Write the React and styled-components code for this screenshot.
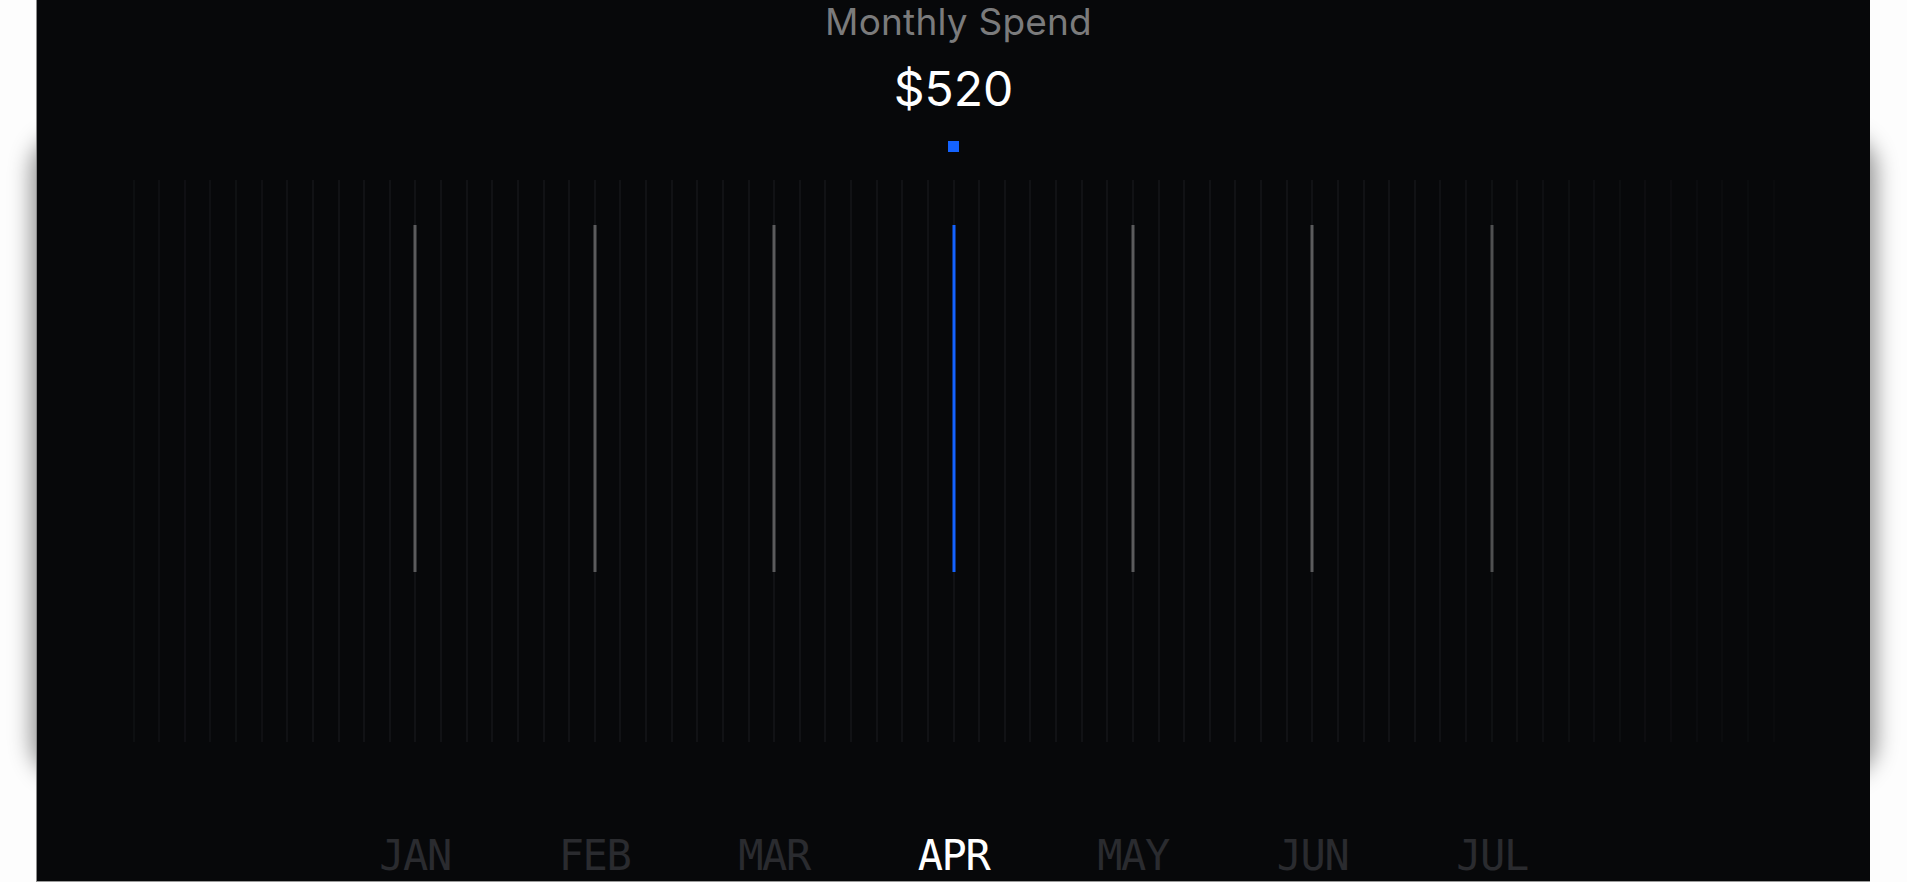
import React from "react";
import styled, { createGlobalStyle } from "styled-components";

const MONTHS = ["JAN", "FEB", "MAR", "APR", "MAY", "JUN", "JUL"];
const ACTIVE = 3;
const PER_MONTH = 7;
const LEAD = 11;
const TICKS = LEAD * 2 + PER_MONTH * (MONTHS.length - 1) + 1;
const STEP = 25.64;

function Chart() {
  const ticks = [];
  for (let i = 0; i < TICKS; i++) {
    const rel = i - LEAD;
    const isMonth = rel >= 0 && rel % PER_MONTH === 0 && rel / PER_MONTH < MONTHS.length;
    const month = isMonth ? rel / PER_MONTH : -1;
    ticks.push(
      <TickSlot key={i}>
        <FaintLine />
        {isMonth && <MonthLine $active={month === ACTIVE} />}
      </TickSlot>
    );
  }
  return (
    <ChartArea>
      <TickRow>{ticks}</TickRow>
    </ChartArea>
  );
}

export default function App() {
  return (
    <>
      <GlobalStyle />
      <Page>
        <Panel>
          <Title>Monthly Spend</Title>
          <Amount>$520</Amount>
          <Marker />
          <Chart />
          <Labels>
            {MONTHS.map((m, i) => (
              <Label key={m} $active={i === ACTIVE}>
                {m}
              </Label>
            ))}
          </Labels>
        </Panel>
      </Page>
    </>
  );
}

const GlobalStyle = createGlobalStyle`
  html, body {
    margin: 0;
    padding: 0;
    background: #fdfdfd;
  }
  body {
    font-family: "Inter", "Liberation Sans", sans-serif;
  }
`;

const Page = styled.div`
  height: 882px;
  padding: 0 37px 0 36px;
  overflow: hidden;
  position: relative;
  z-index: 0;
`;

const Panel = styled.div`
  height: 881px;
  background: #07080a;
  border-left: 1px solid #8c8c8c;
  border-bottom: 1px solid #9a9a9a;
  display: flex;
  flex-direction: column;
  align-items: center;
  position: relative;
`;

const Title = styled.div`
  margin-left: 10px;
  font-size: 37px;
  line-height: 44px;
  color: #7b7b7c;
  letter-spacing: 0.2px;
`;

const Amount = styled.div`
  margin-top: 17px;
  font-size: 48px;
  line-height: 56px;
  color: #ffffff;
`;

const Marker = styled.div`
  width: 11px;
  height: 11px;
  margin-top: 24px;
  background: #1463ff;
`;

const ChartArea = styled.div`
  align-self: stretch;
  margin-top: 28px;
  height: 562px;
  display: flex;
  justify-content: center;
  position: relative;

  &::before {
    content: "";
    position: absolute;
    inset: -40px 0 -30px;
    z-index: -1;
    border-radius: 30px;
    box-shadow: 0 0 22px 6px rgba(0, 0, 0, 0.42);
  }
`;

const TickRow = styled.div`
  display: flex;
  height: 100%;
  -webkit-mask-image: linear-gradient(
    to right,
    rgba(0, 0, 0, 0.7) 0%,
    #000 12%,
    #000 78%,
    rgba(0, 0, 0, 0.3) 100%
  );
  mask-image: linear-gradient(
    to right,
    rgba(0, 0, 0, 0.7) 0%,
    #000 12%,
    #000 78%,
    rgba(0, 0, 0, 0.3) 100%
  );
`;

const TickSlot = styled.div`
  width: ${STEP}px;
  height: 100%;
  position: relative;
  display: flex;
  justify-content: center;
`;

const FaintLine = styled.div`
  width: 2px;
  height: 100%;
  background: #111215;
`;

const MonthLine = styled.div`
  position: absolute;
  top: 45px;
  left: 50%;
  width: 3px;
  height: 347px;
  transform: translateX(-50%);
  background: ${(p) => (p.$active ? "#1463ff" : "#5b5b5d")};
`;

const Labels = styled.div`
  display: flex;
  justify-content: center;
  margin-top: auto;
  margin-bottom: 3px;
`;

const Label = styled.div`
  width: 179.5px;
  text-align: center;
  font-family: "DejaVu Sans Mono", "Liberation Mono", monospace;
  font-size: 42px;
  line-height: 44px;
  letter-spacing: -1.5px;
  color: ${(p) => (p.$active ? "#ffffff" : "#2a2b2f")};
`;
